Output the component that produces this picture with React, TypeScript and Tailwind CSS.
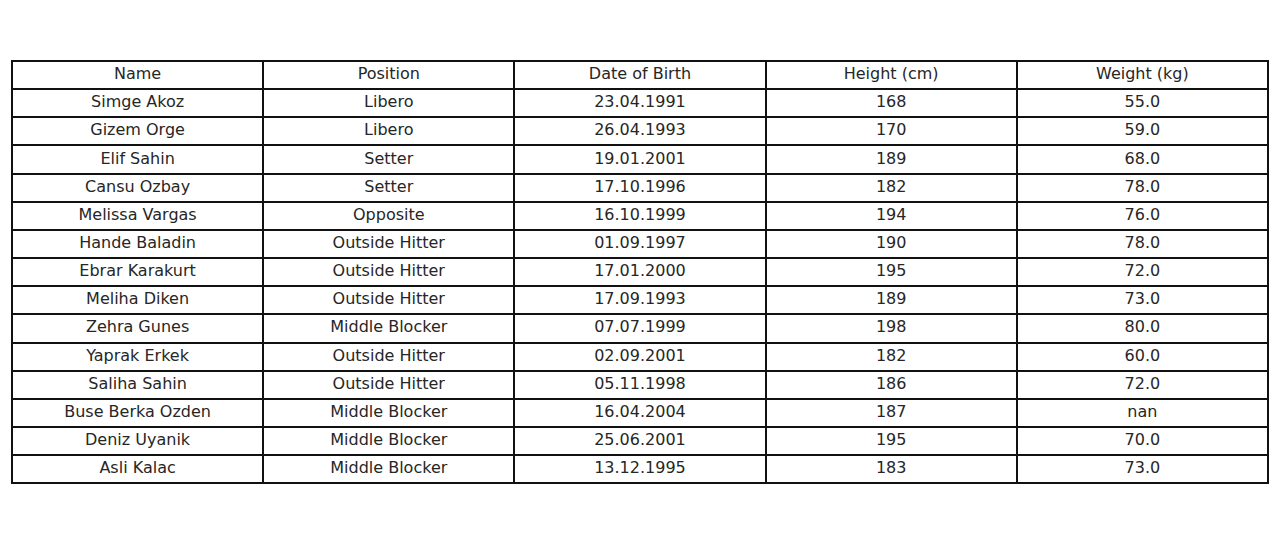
import React from "react";

const headers = ["Name", "Position", "Date of Birth", "Height (cm)", "Weight (kg)"];
const rows: string[][] = [
  ["Simge Akoz", "Libero", "23.04.1991", "168", "55.0"],
  ["Gizem Orge", "Libero", "26.04.1993", "170", "59.0"],
  ["Elif Sahin", "Setter", "19.01.2001", "189", "68.0"],
  ["Cansu Ozbay", "Setter", "17.10.1996", "182", "78.0"],
  ["Melissa Vargas", "Opposite", "16.10.1999", "194", "76.0"],
  ["Hande Baladin", "Outside Hitter", "01.09.1997", "190", "78.0"],
  ["Ebrar Karakurt", "Outside Hitter", "17.01.2000", "195", "72.0"],
  ["Meliha Diken", "Outside Hitter", "17.09.1993", "189", "73.0"],
  ["Zehra Gunes", "Middle Blocker", "07.07.1999", "198", "80.0"],
  ["Yaprak Erkek", "Outside Hitter", "02.09.2001", "182", "60.0"],
  ["Saliha Sahin", "Outside Hitter", "05.11.1998", "186", "72.0"],
  ["Buse Berka Ozden", "Middle Blocker", "16.04.2004", "187", "nan"],
  ["Deniz Uyanik", "Middle Blocker", "25.06.2001", "195", "70.0"],
  ["Asli Kalac", "Middle Blocker", "13.12.1995", "183", "73.0"],
];

export default function App() {
  const all = [headers, ...rows];
  return (
    <div className="w-[1280px] h-[543px] bg-white pt-[60px] pl-[11px] font-['DejaVu_Sans',sans-serif] text-[#262626]">
      <table className="w-[1258px] border-collapse table-fixed">
        <tbody>
          {all.map((r, i) => (
            <tr key={i} className="h-[28.17px]">
              {r.map((c, j) => (
                <td
                  key={j}
                  className="border-2 border-[#111] text-center align-middle p-0 pb-[2px] text-[16px] leading-none"
                >
                  {c}
                </td>
              ))}
            </tr>
          ))}
        </tbody>
      </table>
    </div>
  );
}
